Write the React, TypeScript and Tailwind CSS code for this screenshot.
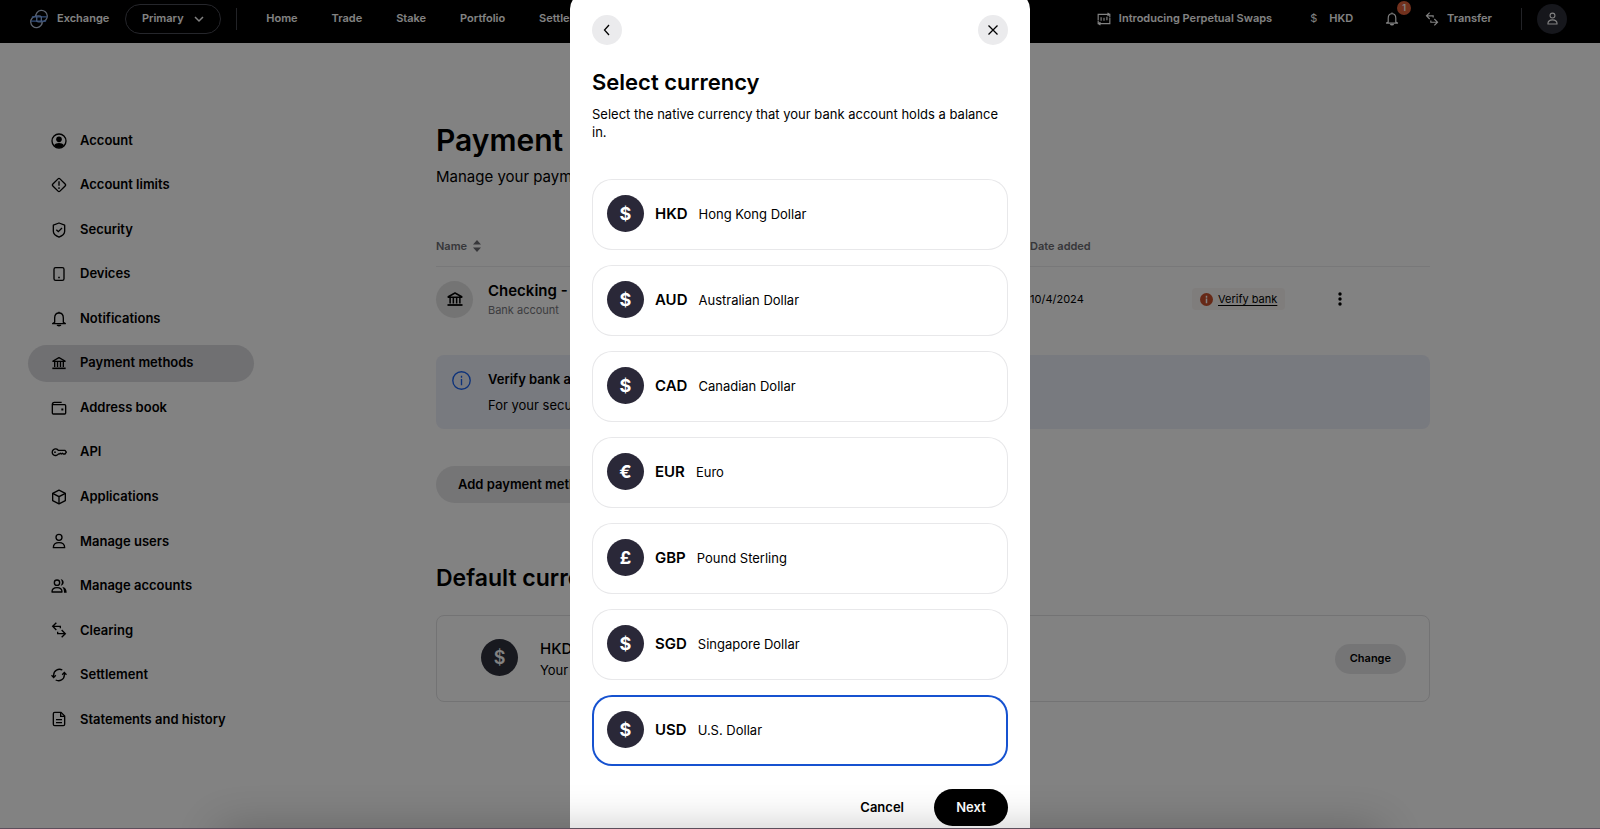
import { useState } from "react";
import type { ReactNode } from "react";
import { clsx } from "clsx";

type IconProps = { className?: string; children: ReactNode };

const Icon = ({ className = "w-4 h-4", children }: IconProps) => (
  <svg
    viewBox="0 0 24 24"
    fill="none"
    stroke="currentColor"
    strokeWidth="2"
    className={clsx("shrink-0", className)}
    aria-hidden="true"
  >
    {children}
  </svg>
);

const BankIcon = ({ className }: { className?: string }) => (
  <Icon className={className}>
    <path d="M3 9 12 4l9 5v.6H3z" strokeLinejoin="round" />
    <path d="M5.500 10v8M9.800 10v8M14.200 10v8M18.500 10v8" />
    <path d="M2 20h20" strokeWidth="2.4" />
  </Icon>
);

const BellIcon = ({ className }: { className?: string }) => (
  <Icon className={className}>
    <path d="M5.500 17V10.500C5.500 6 8 3 12 3s6.500 3 6.500 7.500V17l3 2H2.500z" strokeLinejoin="round" />
    <path d="M9.500 20.500c.5 1.700 4.500 1.700 5 0" strokeWidth="2.600" />
    <path d="M12 3V1" />
  </Icon>
);

const UserIcon = ({ className }: { className?: string }) => (
  <Icon className={className}>
    <circle cx="12" cy="6.500" r="4.500" />
    <path d="M3.500 22c0-5 3-7.500 8.500-7.500s8.500 2.500 8.500 7.500z" strokeLinejoin="round" />
  </Icon>
);

const SwapIcon = ({ className }: { className?: string }) => (
  <Icon className={className}>
    <path d="M8 1 2.500 6.500 8 12M2.500 6.500H14v3" />
    <path d="m16 12 5.500 5.500L16 23M21.500 17.500H10v-3" />
  </Icon>
);

const Logo = () => (
  <svg viewBox="0 0 24 24" fill="none" strokeWidth="1.6" className="w-5 h-5 shrink-0" aria-hidden="true">
    <path d="M8.200 9.500a6.900 6.900 0 1 1 7 5.900" stroke="#b9c6dd" />
    <path d="M15.800 14.500a6.900 6.900 0 1 1-7-5.900" stroke="#b9c6dd" />
    <path d="M3.500 9.500h18M2.500 14.500h18" stroke="#5d97f5" />
    <path d="M8.300 8.600c2.500-.4 6 0 6.500 1v5M9.300 9.500v5c0 1 3.500 1.300 6 .8" stroke="#8fb3ee" />
  </svg>
);

const sections = [
  {
    label: "Account",
    icon: (
      <Icon>
        <circle cx="12" cy="12" r="10.500" />
        <circle cx="12" cy="9.500" r="4.200" fill="currentColor" stroke="none" />
        <path d="M4.500 18.500c3-4.500 12-4.500 15 0-3 5-12 5-15 0z" fill="currentColor" stroke="none" />
      </Icon>
    ),
  },
  {
    label: "Account limits",
    icon: (
      <Icon>
        <rect x="4.500" y="4.500" width="15" height="15" rx="2" transform="rotate(45 12 12)" />
        <path d="M12 6.500v6.500M12 15.500V18" />
      </Icon>
    ),
  },
  {
    label: "Security",
    icon: (
      <Icon>
        <path d="m12 1.500 8.500 3.200V14c0 4-4 7-8.500 8.700C7.500 21 3.500 18 3.500 14V4.700z" strokeLinejoin="round" />
        <path d="m8 11.500 3 3 5.500-5.500" />
      </Icon>
    ),
  },
  {
    label: "Devices",
    icon: (
      <Icon>
        <rect x="4.500" y="2.500" width="15" height="19" rx="2.500" />
        <path d="M12 16v2.500" strokeWidth="2.400" />
      </Icon>
    ),
  },
  { label: "Notifications", icon: <BellIcon /> },
  { label: "Payment methods", icon: <BankIcon /> },
  {
    label: "Address book",
    icon: (
      <Icon>
        <path d="M2 7v12.500c0 .8.700 1.500 1.500 1.500h17c.8 0 1.500-.7 1.500-1.500v-11c0-.8-.7-1.500-1.500-1.500H2zc0-2.500 1-3.500 3-3.500h11" />
        <path d="M15.500 14.200h3" strokeWidth="3" />
      </Icon>
    ),
  },
  {
    label: "API",
    icon: (
      <Icon>
        <path
          d="M11 9.500A5 5 0 1 0 11 15h1.500l1.500-1.200 1.500 1.200 1.500-1.200 1.500 1.200H21l2-2.700-2-2.800z"
          strokeLinejoin="round"
        />
        <circle cx="6" cy="12.200" r="1.300" fill="currentColor" stroke="none" />
      </Icon>
    ),
  },
  {
    label: "Applications",
    icon: (
      <Icon>
        <path d="m12 1.800 9.500 4.700v11L12 22.200 2.500 17.500v-11z" strokeLinejoin="round" />
        <path d="m2.500 6.500 9.500 5 9.500-5M12 11.500v10.700" />
      </Icon>
    ),
  },
  { label: "Manage users", icon: <UserIcon /> },
  {
    label: "Manage accounts",
    icon: (
      <Icon>
        <circle cx="9" cy="7" r="4" />
        <path d="M1.500 21c0-4.500 2.500-6.500 7.500-6.500s7.500 2 7.500 6.500z" strokeLinejoin="round" />
        <path
          d="M14.500 2c6 0 6 9.500 0 9.500 2.500-3 2.500-6.500 0-9.500zM17 13.500c4.500.5 6.500 3.500 6.500 8.500h-4c0-4-.5-6-2.500-8.500z"
          fill="currentColor"
          stroke="none"
        />
      </Icon>
    ),
  },
  { label: "Clearing", icon: <SwapIcon /> },
  {
    label: "Settlement",
    icon: (
      <Icon>
        <path d="M17 4.500C11 1.500 4 5.500 4 12v3M7 19.500c6 3 13-1 13-7.500V9" />
        <path d="m.8 12.500 3.200 3.300 3.200-3.300M16.800 11.500 20 8.200l3.200 3.300" />
      </Icon>
    ),
  },
  {
    label: "Statements and history",
    icon: (
      <Icon>
        <path d="M3.500 4c0-1 .7-2 2-2H15l5.500 5.500V20c0 1-.7 2-2 2h-13c-1.300 0-2-1-2-2z" />
        <path d="M14.500 2v6h6M7.500 13h9M7.500 17.500h9" />
      </Icon>
    ),
  },
];

const currencies = [
  { code: "HKD", name: "Hong Kong Dollar", symbol: "$" },
  { code: "AUD", name: "Australian Dollar", symbol: "$" },
  { code: "CAD", name: "Canadian Dollar", symbol: "$" },
  { code: "EUR", name: "Euro", symbol: "€" },
  { code: "GBP", name: "Pound Sterling", symbol: "£" },
  { code: "SGD", name: "Singapore Dollar", symbol: "$" },
  { code: "USD", name: "U.S. Dollar", symbol: "$" },
];

const Header = () => (
  <header className="h-[43px] pb-[6px] pl-[29px] pr-[33px] flex items-center justify-between bg-black text-white text-[11px] font-semibold">
    <div className="flex items-center">
      <a href="#" className="flex items-center gap-2">
        <Logo />
        Exchange
      </a>
      <button className="ml-4 w-24 h-[30px] rounded-full border border-[#4a4b55] flex items-center justify-center gap-[9px]">
        Primary
        <Icon className="w-3 h-3">
          <path d="m4 8 8 8 8-8" strokeWidth="3" />
        </Icon>
      </button>
      <div className="ml-[15px] w-px h-[22px] bg-[#44454d]" />
      <nav className="ml-[29px] flex gap-[34px]">
        {["Home", "Trade", "Stake", "Portfolio", "Settlement"].map((item) => (
          <a key={item} href="#">
            {item}
          </a>
        ))}
      </nav>
    </div>

    <div className="flex items-center">
      <a href="#" className="flex items-center gap-2">
        <Icon className="w-[14px] h-[14px]">
          <path d="M22 9V4H2v10M2 15v5h20V10M18 1.500 21.500 4 18 6.500M6 17.500 2.500 20 6 22.500" />
          <path d="M7 9v6M12 10v5M17 8v6" />
        </Icon>
        Introducing Perpetual Swaps
      </a>
      <button className="ml-[38px] flex items-center gap-3">
        <span className="font-normal">$</span>
        HKD
      </button>
      <button className="relative ml-8" aria-label="Notifications">
        <BellIcon className="w-[14px] h-[14px]" />
        <span className="absolute -top-[11px] left-[12px] w-[14px] h-[14px] rounded-full bg-[#e0603a] text-[9px] leading-[14px] text-center">
          1
        </span>
      </button>
      <a href="#" className="ml-[26px] flex items-center gap-2">
        <SwapIcon className="w-[14px] h-[14px]" />
        Transfer
      </a>
      <div className="ml-[29px] w-px h-[22px] bg-[#44454d]" />
      <button
        className="ml-[15px] w-[30px] h-[30px] rounded-full bg-[#2b2d38] flex items-center justify-center"
        aria-label="Profile"
      >
        <UserIcon className="w-[13px] h-[13px]" />
      </button>
    </div>
  </header>
);

const Sidebar = () => (
  <nav className="w-[226px] h-[616px] shrink-0 flex flex-col justify-between">
    {sections.map(({ label, icon }) => (
      <a
        key={label}
        href="#"
        className={clsx(
          "h-[37px] pl-[23px] rounded-full flex items-center gap-[13px] text-[13px] font-semibold",
          label === "Payment methods" && "bg-[#dcdce0]"
        )}
      >
        {icon}
        {label}
      </a>
    ))}
  </nav>
);

const PaymentMethods = () => (
  <main className="flex-1 min-w-0">
    <h1 className="text-[30px] leading-9 font-semibold">Payment methods</h1>
    <p className="mt-2 text-[15px] leading-[22px]">Manage your payment methods and default currency.</p>

    <table className="mt-[38px] w-full table-fixed text-[11px] text-left">
      <thead>
        <tr className="h-10 border-b border-[#ececee] text-[#6d6d73]">
          <th className="font-semibold">
            <button className="flex items-center gap-[6px]">
              Name
              <svg viewBox="0 0 8 12" fill="currentColor" className="w-2 h-3" aria-hidden="true">
                <path d="M4 0 8 4.500H0zM4 12 0 7.500h8z" />
              </svg>
            </button>
          </th>
          <th className="w-[162px] font-semibold">Date added</th>
          <th className="w-[138px]" />
          <th className="w-[100px]" />
        </tr>
      </thead>
      <tbody>
        <tr className="h-[66px]">
          <td>
            <div className="flex items-center gap-[15px]">
              <div className="w-[37px] h-[37px] rounded-full bg-[#e4e4e4] flex items-center justify-center">
                <BankIcon className="w-[18px] h-[18px]" />
              </div>
              <div>
                <div className="text-[15px] leading-[22px] font-semibold">Checking - 1234</div>
                <div className="leading-4 text-[#78787e]">Bank account</div>
              </div>
            </div>
          </td>
          <td>10/4/2024</td>
          <td>
            <a
              href="#"
              className="inline-flex items-center gap-[5px] h-[22px] px-2 rounded bg-[#faf6f4] underline underline-offset-2"
            >
              <svg viewBox="0 0 14 14" className="w-[13px] h-[13px]" aria-hidden="true">
                <circle cx="7" cy="7" r="7" fill="#c9502b" />
                <path d="M7 3v2M7 6v5" stroke="#fff" strokeWidth="1.600" />
              </svg>
              Verify bank
            </a>
          </td>
          <td>
            <button className="w-5 h-5 flex items-center justify-center" aria-label="More actions">
              <svg viewBox="0 0 4 14" className="w-1 h-[14px]" aria-hidden="true">
                <circle cx="2" cy="2" r="1.700" />
                <circle cx="2" cy="7" r="1.700" />
                <circle cx="2" cy="12" r="1.700" />
              </svg>
            </button>
          </td>
        </tr>
      </tbody>
    </table>

    <div className="mt-[23px] px-4 py-[15px] rounded-lg bg-[#eceffa] flex gap-[17px] text-[13px] leading-[18px]">
      <Icon className="w-[19px] h-[19px] mt-px text-[#1a63f0]">
        <circle cx="12" cy="12" r="11" strokeWidth="1.700" />
        <path d="M12 6v2.500M12 10v8" strokeWidth="1.700" />
      </Icon>
      <div>
        <div className="font-semibold">Verify bank account</div>
        <p className="mt-2">For your security, verify your bank account.</p>
      </div>
    </div>

    <button className="mt-[37px] h-[37px] px-[22px] rounded-full bg-[#e6e6e8] text-[13px] font-semibold">
      Add payment method
    </button>

    <h2 className="mt-[60px] text-[23px] leading-[30px] font-semibold">Default currency</h2>
    <div className="mt-[22px] h-[87px] pl-11 pr-[23px] rounded-lg border border-[#e2e2e4] flex items-center gap-[22px]">
      <div className="mb-[2px] w-[37px] h-[37px] rounded-full bg-[#30323e] flex items-center justify-center text-white text-lg font-semibold">
        $
      </div>
      <div className="flex-1">
        <div className="text-[15px] leading-[22px] font-medium">HKD</div>
        <div className="text-[13px] leading-5">Your default currency</div>
      </div>
      <button className="h-[30px] px-[15px] rounded-full bg-[#e6e6e8] text-[11px] font-semibold">Change</button>
    </div>
  </main>
);

const CurrencyDialog = () => {
  const [selected, setSelected] = useState("USD");

  return (
    <div
      role="dialog"
      aria-modal="true"
      aria-labelledby="dialog-title"
      className="w-[460px] px-[22px] pt-[22px] pb-[10px] rounded-t-2xl bg-white"
    >
      <div className="flex justify-between">
        <button
          className="w-[30px] h-[30px] rounded-full bg-[#ebebed] flex items-center justify-center"
          aria-label="Back"
        >
          <Icon className="w-3 h-3">
            <path d="m16 2-9 10 9 10" strokeWidth="2.600" />
          </Icon>
        </button>
        <button
          className="w-[30px] h-[30px] rounded-full bg-[#ebebed] flex items-center justify-center"
          aria-label="Close"
        >
          <Icon className="w-3 h-3">
            <path d="m3 3 18 18M21 3 3 21" strokeWidth="2.600" />
          </Icon>
        </button>
      </div>

      <h2 id="dialog-title" className="mt-[23px] text-[22px] leading-7 font-semibold">
        Select currency
      </h2>
      <p className="mt-[9px] text-[13px] leading-[18px]">
        Select the native currency that your bank account holds a balance in.
      </p>

      {/* Currency options */}
      <div className="mt-[38px] flex flex-col gap-[15px]">
        {currencies.map(({ code, name, symbol }) => (
          <label
            key={code}
            className={clsx(
              "h-[71px] px-[15px] rounded-[20px] flex items-center cursor-pointer ring-inset",
              selected === code ? "ring-2 ring-[#1652d0]" : "ring-1 ring-[#e8e8ea]"
            )}
          >
            <input
              type="radio"
              name="currency"
              value={code}
              checked={selected === code}
              onChange={() => setSelected(code)}
              className="sr-only"
            />
            <span className="mb-[2px] w-[37px] h-[37px] rounded-full bg-[#2a2838] flex items-center justify-center text-white text-lg font-bold">
              {symbol}
            </span>
            <span className="ml-[11px] text-[15px] font-semibold">{code}</span>
            <span className="ml-[11px] text-[13px]">{name}</span>
          </label>
        ))}
      </div>

      <div className="mt-[23px] flex justify-end items-center text-[13px] font-semibold">
        <button className="h-[37px] px-[30px]">Cancel</button>
        <button className="w-[74px] h-[37px] rounded-full bg-black text-white">Next</button>
      </div>
    </div>
  );
};

export default function App() {
  return (
    <div className="relative h-screen overflow-hidden bg-white text-black font-['Inter',sans-serif]">
      <Header />
      <div className="pt-[79px] pl-7 pr-[170px] flex gap-[182px]">
        <Sidebar />
        <PaymentMethods />
      </div>

      <div className="absolute inset-0 bg-black/49 flex items-center justify-center">
        <CurrencyDialog />
      </div>

      {/* Shade along the bottom edge of the window */}
      <div className="absolute top-full inset-x-[220px] h-10 shadow-[0_0_44px_rgba(0,0,0,0.24)] pointer-events-none" />
      <div className="absolute bottom-0 inset-x-0 h-px bg-[#5c4f5c] pointer-events-none" />
    </div>
  );
}
